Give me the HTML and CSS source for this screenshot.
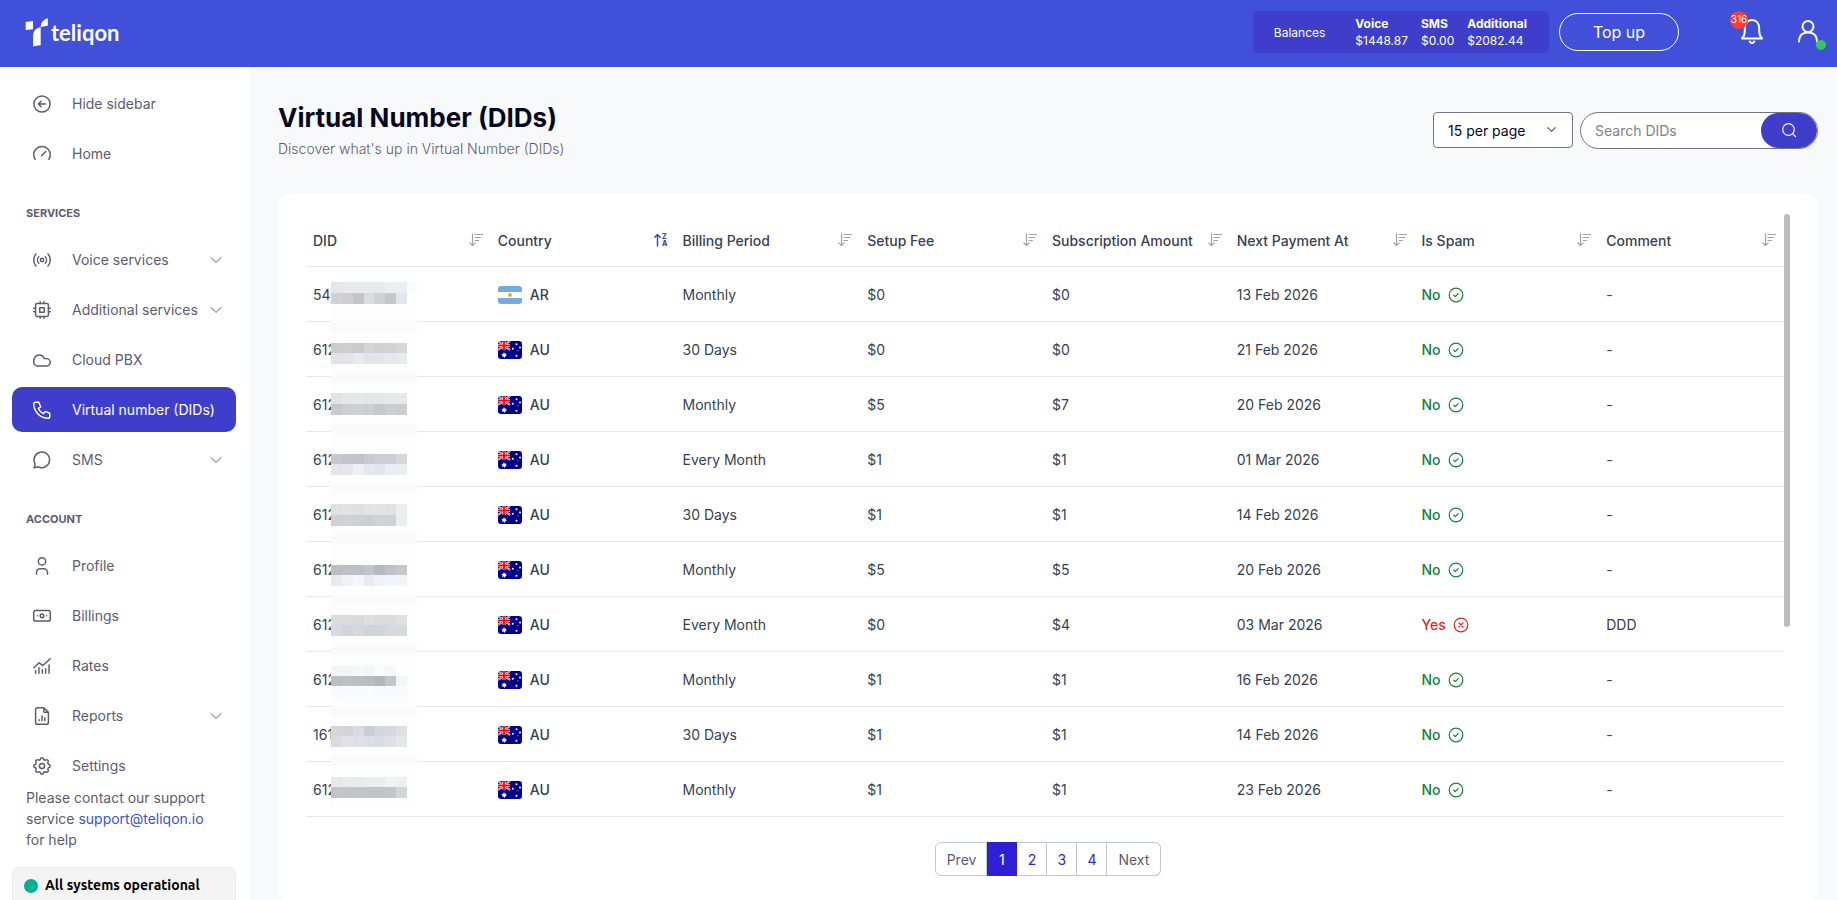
FILE: index.html
```html
<!DOCTYPE html>
<html lang="en">

<head>
  <meta charset="UTF-8" />
  <meta name="viewport" content="width=device-width, initial-scale=1.0" />
  <title>Virtual Number (DIDs)</title>
  <link rel="stylesheet" href="styles.css">
</head>

<body>
  <!-- shared icons -->
  <svg class="sprite" aria-hidden="true">
    <symbol id="chevron" viewBox="0 0 12 12"><path d="M1 3.5l5 5 5-5" /></symbol>
    <symbol id="sort" viewBox="0 0 14 14">
      <path d="M3.5 1v11.5M.8 9.8l2.7 2.7 2.7-2.7M6 1.5h7.5M6 4.5h5.5M6 7.5h3.5" />
    </symbol>
    <symbol id="ok" viewBox="0 0 16 16"><circle cx="8" cy="8" r="6.8" /><path d="M5.8 8.2l1.5 1.4 2.9-2.9" /></symbol>
    <symbol id="bad" viewBox="0 0 16 16"><circle cx="8" cy="8" r="6.8" /><path d="M6 6l4 4M10 6l-4 4" /></symbol>
    <symbol id="flag-AR" viewBox="0 0 24 18">
      <path fill="#fff" d="M0 0h24v18H0z" />
      <path fill="#74acdf" d="M0 0h24v6H0zM0 12h24v6H0z" />
      <circle cx="12" cy="9" r="2" fill="#e9a93a" />
    </symbol>
    <symbol id="flag-AU" viewBox="0 0 24 18">
      <path fill="#00008b" d="M0 0h24v18H0z" />
      <path stroke="#fff" stroke-width="2" stroke-linecap="butt" d="M0 0l12 9M12 0L0 9" />
      <path stroke="#f00" stroke-width=".8" stroke-linecap="butt" d="M0 0l12 9M12 0L0 9" />
      <path stroke="#fff" stroke-width="3" stroke-linecap="butt" d="M6 0v9M0 4.5h12" />
      <path stroke="#f00" stroke-width="1.8" stroke-linecap="butt" d="M6 0v9M0 4.5h12" />
      <g fill="#fff">
        <path d="M6 11.3l.8 1.5 1.7-.3-.7 1.5 1.2 1.1-1.7.2-.5 1.6-1.1-1.3-1.6.5.5-1.6-1.3-1.1 1.7-.4z" />
        <circle cx="18.5" cy="3.3" r="1" />
        <circle cx="14.8" cy="7.7" r="1" />
        <circle cx="22" cy="6.5" r="1" />
        <circle cx="18.5" cy="14.8" r="1" />
        <circle cx="20" cy="9.8" r=".5" />
      </g>
    </symbol>
  </svg>

  <div class="app">
    <header class="topbar">
      <a class="logo" href="#" aria-label="teliqon">
        <svg width="24" height="30" viewBox="0 0 24 30">
          <path d="M.7 4L8 3v8.3L.7 12z" />
          <path d="M22.8.2v7.5l-7 1.3c-.2-4 2.500-7.500 7-8.800z" />
          <path d="M8 28.600V18c0-5 3-8 7.700-9v18z" />
        </svg>
        <span>teliqon</span>
      </a>
      <div class="balances">
        <span class="balances-title">Balances</span>
        <dl>
          <div><dt>Voice</dt><dd>$1448.87</dd></div>
          <div><dt>SMS</dt><dd>$0.00</dd></div>
          <div><dt>Additional</dt><dd>$2082.44</dd></div>
        </dl>
      </div>
      <button class="topup" type="button">Top up</button>
      <button class="bell" type="button" aria-label="Notifications">
        <svg width="24" height="28" viewBox="0 0 24 28">
          <path d="M2 20.5c2-2 2.800-4 2.800-7.500V11C4.800 5.500 7.500 2 12 2s7.200 3.500 7.200 9v2c0 3.500.8 5.500 2.800 7.500z" />
          <path d="M9.800 23.500c1 2 3.400 2 4.400 0" />
        </svg>
        <span class="badge">316</span>
      </button>
      <button class="user" type="button" aria-label="Account">
        <svg width="22" height="26" viewBox="0 0 22 26">
          <circle cx="11" cy="7.5" r="5.5" />
          <path d="M2 22.5c0-6 3.500-9 9-9s9 3 9 9" />
        </svg>
        <span class="status-dot"></span>
      </button>
    </header>

    <aside class="sidebar">
      <nav>
        <a href="#">
          <svg class="icon" viewBox="0 0 24 24"><circle cx="12" cy="12" r="8.8" /><path d="M16 12H8M11 9l-3 3 3 3" /></svg>
          <span>Hide sidebar</span>
        </a>
        <a href="#">
          <svg class="icon" viewBox="0 0 24 24"><path d="M4.5 17.8a9 9 0 1 1 15 0M11.500 13.800l4.500-4.500" /></svg>
          <span>Home</span>
        </a>
        <h2>SERVICES</h2>
        <a href="#">
          <svg class="icon" viewBox="0 0 24 24"><circle cx="12" cy="12" r="1.8" /><path d="M8.5 15.500a5 5 0 0 1 0-7M15.500 8.500a5 5 0 0 1 0 7M5.500 18.500a9.500 9.500 0 0 1 0-13M18.500 5.500a9.500 9.500 0 0 1 0 13" /></svg>
          <span>Voice services</span>
          <svg class="chevron"><use href="#chevron" /></svg>
        </a>
        <a href="#">
          <svg class="icon" viewBox="0 0 24 24"><rect x="5" y="5" width="14" height="14" rx="1.5" /><rect x="9.5" y="9.5" width="5" height="5" /><path d="M3 10h2M3 14h2M10 3v2M14 3v2M21 10h-2M21 14h-2M14 21v-2M10 21v-2" /></svg>
          <span>Additional services</span>
          <svg class="chevron"><use href="#chevron" /></svg>
        </a>
        <a href="#">
          <svg class="icon" viewBox="0 0 24 24"><path d="M7 18.500a4.200 4.200 0 0 1-4-4.300C3 10 4.500 6.500 9 6.500c3 0 4.700 1.800 5.300 4h2.700c2.200 0 4 1.800 4 4s-1.800 4-4 4z" /></svg>
          <span>Cloud PBX</span>
        </a>
        <a class="active" href="#">
          <svg class="icon" viewBox="0 0 24 24"><path d="M5 3.500h3.500l2 5L8 10.300a11 11 0 0 0 5.700 5.700l1.800-2.500 5 2V19a2 2 0 0 1-2 2A16 16 0 0 1 3 5.500a2 2 0 0 1 2-2" /></svg>
          <span>Virtual number (DIDs)</span>
        </a>
        <a href="#">
          <svg class="icon" viewBox="0 0 24 24"><path d="M3.500 20.500l1.100-4.100a8.500 8.500 0 1 1 3.300 3z" /></svg>
          <span>SMS</span>
          <svg class="chevron"><use href="#chevron" /></svg>
        </a>
        <h2>ACCOUNT</h2>
        <a href="#">
          <svg class="icon" viewBox="0 0 24 24"><circle cx="12" cy="7" r="4" /><path d="M6 21v-2a4 4 0 0 1 4-4h4a4 4 0 0 1 4 4v2" /></svg>
          <span>Profile</span>
        </a>
        <a href="#">
          <svg class="icon" viewBox="0 0 24 24"><rect x="3" y="6" width="18" height="11.5" rx="2" /><circle cx="12" cy="11.8" r="2" /><path d="M7 11.800h.01M17 11.800h.01" /></svg>
          <span>Billings</span>
        </a>
        <a href="#">
          <svg class="icon" viewBox="0 0 24 24"><path d="M3 14l6-5.500 4 3L21 4M5 20v-3M8.700 20v-6M12.400 20v-4M16 20v-5M19.700 20v-9" /></svg>
          <span>Rates</span>
        </a>
        <a href="#">
          <svg class="icon" viewBox="0 0 24 24"><path d="M14 3v4a1 1 0 0 0 1 1h4M17 21H7a2 2 0 0 1-2-2V5a2 2 0 0 1 2-2h7l5 5v11a2 2 0 0 1-2 2zM9 17v-1M12 17v-5M15 17v-3" /></svg>
          <span>Reports</span>
          <svg class="chevron"><use href="#chevron" /></svg>
        </a>
        <a href="#">
          <svg class="icon" viewBox="0 0 24 24"><path d="M10.325 4.317c.426-1.756 2.924-1.756 3.350 0a1.724 1.724 0 0 0 2.573 1.066c1.543-.94 3.310.826 2.370 2.370a1.724 1.724 0 0 0 1.065 2.572c1.756.426 1.756 2.924 0 3.350a1.724 1.724 0 0 0-1.066 2.573c.94 1.543-.826 3.310-2.370 2.370a1.724 1.724 0 0 0-2.572 1.065c-.426 1.756-2.924 1.756-3.350 0a1.724 1.724 0 0 0-2.573-1.066c-1.543.94-3.310-.826-2.370-2.370a1.724 1.724 0 0 0-1.065-2.572c-1.756-.426-1.756-2.924 0-3.350a1.724 1.724 0 0 0 1.066-2.573c-.94-1.543.826-3.310 2.370-2.370 1 .608 2.296.07 2.572-1.065z" /><circle cx="12" cy="12" r="2.8" /></svg>
          <span>Settings</span>
        </a>
      </nav>
      <p class="support">Please contact our support service <a href="mailto:support@teliqon.io">support@teliqon.io</a> for help</p>
      <a class="system" href="#"><i></i>All systems operational</a>
    </aside>

    <main>
      <div class="page-head">
        <div>
          <h1>Virtual Number (DIDs)</h1>
          <p>Discover what's up in Virtual Number (DIDs)</p>
        </div>
        <form class="filters">
          <div class="select">
            <select aria-label="Rows per page">
              <option>15 per page</option>
              <option>30 per page</option>
              <option>50 per page</option>
            </select>
            <svg><use href="#chevron" /></svg>
          </div>
          <div class="search">
            <input type="text" placeholder="Search DIDs" aria-label="Search DIDs">
            <button type="button" aria-label="Search">
              <svg width="16" height="16" viewBox="0 0 16 16"><circle cx="7.5" cy="7.5" r="5.8" /><path d="M11.8 11.800l2.700 2.700" /></svg>
            </button>
          </div>
        </form>
      </div>

      <section class="card">
        <div class="table-wrap">
          <div class="table-box">
            <table>
              <thead><tr></tr></thead>
              <tbody></tbody>
            </table>
            <svg class="mosaic" width="86" height="525" aria-hidden="true"></svg>
          </div>
          <div class="scrollbar"><div class="thumb"></div></div>
        </div>
        <div class="pagination">
          <button type="button">Prev</button>
          <button type="button" class="page active">1</button>
          <button type="button" class="page">2</button>
          <button type="button" class="page">3</button>
          <button type="button" class="page">4</button>
          <button type="button">Next</button>
        </div>
      </section>
    </main>
  </div>

  <script>
    const columns = ['DID', 'Country', 'Billing Period', 'Setup Fee', 'Subscription Amount', 'Next Payment At', 'Is Spam', 'Comment']
    // did, country, period, setup, subscription, next payment, spam, comment
    const rows = [
      ['541', 'AR', 'Monthly', '$0', '$0', '13 Feb 2026', false, '-'],
      ['6125', 'AU', '30 Days', '$0', '$0', '21 Feb 2026', false, '-'],
      ['6125', 'AU', 'Monthly', '$5', '$7', '20 Feb 2026', false, '-'],
      ['6125', 'AU', 'Every Month', '$1', '$1', '01 Mar 2026', false, '-'],
      ['6125', 'AU', '30 Days', '$1', '$1', '14 Feb 2026', false, '-'],
      ['6125', 'AU', 'Monthly', '$5', '$5', '20 Feb 2026', false, '-'],
      ['6125', 'AU', 'Every Month', '$0', '$4', '03 Mar 2026', true, 'DDD'],
      ['6125', 'AU', 'Monthly', '$1', '$1', '16 Feb 2026', false, '-'],
      ['1613', 'AU', '30 Days', '$1', '$1', '14 Feb 2026', false, '-'],
      ['6125', 'AU', 'Monthly', '$1', '$1', '23 Feb 2026', false, '-']
    ]

    const sortIcon = '<svg class="sort"><use href="#sort" /></svg>'
    const sortedIcon = `<svg class="sort sorted" viewBox="0 0 14 14"><path d="M3.5 13V1.500M.8 4.200l2.700-2.700 2.700 2.700" />
      <text x="8" y="6">Z</text><text x="8" y="13">A</text></svg>`

    document.querySelector('thead tr').innerHTML = columns.map(name => `
      <th scope="col"><div>${name}${name === 'Country' ? sortedIcon : sortIcon}</div></th>`).join('')

    document.querySelector('tbody').innerHTML = rows.map(([did, country, period, setup, fee, next, spam, comment]) => `
      <tr>
        <td>${did}</td>
        <td><div class="country"><svg><use href="#flag-${country}" /></svg>${country}</div></td>
        <td>${period}</td>
        <td>${setup}</td>
        <td>${fee}</td>
        <td>${next}</td>
        <td><div class="spam ${spam ? 'yes' : ''}">${spam ? 'Yes' : 'No'}<svg><use href="#${spam ? 'bad' : 'ok'}" /></svg></div></td>
        <td>${comment}</td>
      </tr>`).join('')

    // hides the numbers: y of each strip and the grey of its cells
    const strips = [
      [0, 'e5 e8 e8 e8 e8 ed ec f9'], [11, 'd0 ce c3 db d0 c6 e4'],
      [61, 'cb cd c9 d4 d0 d2 d6'], [71, 'e2 e2 e9 e3 e3 e6 e9'],
      [111, 'e2 e6 e6 e4 e6 e7 e8'], [122, 'c8 cd cf cd c6 cd cb'],
      [172, 'c8 c4 c1 c8 cd cd d6'], [182, 'e4 e6 ef e6 e4 ec ec'],
      [222, 'df e1 de e2 e3 e1 ec'], [233, 'd0 d2 cf cd d1 d0 ec'],
      [283, 'bc bf bf c4 b8 c0 c7'], [293, 'e9 f2 f6 ea f2 f3 f3'],
      [333, 'db db d8 df da db df'], [343, 'd8 d3 d7 d2 d2 d7 d8'],
      [384, 'f3 f3 f7 f4 fa f6'], [394, 'bd bf bd bb b5 c4 f4'], [404, 'f8 f9 f9 fa f9 f9 f9'],
      [444, 'd5 d3 db cc d6 d8 df'], [454, 'da e1 df dd db df e6'],
      [495, 'e7 e9 ea ec ec f1 ee'], [505, 'c3 c2 c4 c2 c2 c4 d4']
    ]
    const edges = [0, 11, 22, 33, 43, 54, 65, 76, 86]
    const bands = [40, 91, 142, 202, 252, 313, 363, 424, 474]
    let cells = '<path fill="#fdfdfd" d="M0 0h86v525H0z" opacity=".95" />'
    bands.forEach(y => {
      cells += `<rect y="${y}" width="86" height="10" fill="#fafafa" />`
    })
    strips.forEach(([y, greys]) => {
      greys.split(' ').forEach((g, i) => {
        const v = parseInt(g, 16)
        cells += `<rect x="${edges[i]}" y="${y}" width="${edges[i + 1] - edges[i]}" height="11" fill="rgb(${v}, ${v + 1}, ${v + 4})" />`
      })
    })
    document.querySelector('.mosaic').innerHTML = cells
  </script>
</body>

</html>
```

FILE: styles.css
```css
* {
  margin: 0;
  padding: 0;
  box-sizing: border-box;
}

body {
  font: 14px/21px Inter, "Liberation Sans", sans-serif;
  color: #374151;
  background: #f8f9fb;
}

a {
  text-decoration: none;
  color: inherit;
}

button,
input,
select {
  font: inherit;
  border: 0;
  background: none;
}

svg {
  flex-shrink: 0;
  fill: none;
  stroke-linecap: round;
  stroke-linejoin: round;
}

.sprite {
  position: absolute;
  width: 0;
  height: 0;
}

.app {
  display: grid;
  grid-template-columns: 250px 1fr;
  grid-template-rows: 67px minmax(0, 1fr);
  height: 100vh;
  overflow: hidden;
}

/* top bar */
.topbar {
  grid-column: 1 / 3;
  display: flex;
  align-items: center;
  padding: 0 18px 3px 25px;
  background: #4150d8;
  color: #fff;
}

.topbar button {
  color: #fff;
}

.logo {
  display: flex;
  align-items: center;
  gap: 2px;
  margin-right: auto;
  padding-top: 2px;
  font: 700 22px/30px Lato, sans-serif;
}

.logo svg {
  fill: #fff;
}

.balances {
  display: flex;
  align-items: center;
  gap: 30px;
  height: 42px;
  padding: 0 22px 0 21px;
  border-radius: 6px;
  background: #3e3ecb;
  font-size: 12px;
  line-height: 17px;
}

.balances dl {
  display: flex;
  gap: 13px;
}

.balances dt {
  font-weight: 700;
}

.topup {
  width: 120px;
  height: 38px;
  margin: 0 61px 0 10px;
  border: 1px solid #fff;
  border-radius: 19px;
  font-size: 16px;
}

.bell,
.user {
  position: relative;
  display: flex;
}

.topbar button svg {
  stroke: #fff;
  stroke-width: 2;
}

.user {
  margin-left: 33px;
}

.badge {
  position: absolute;
  top: -7px;
  left: -10px;
  width: 18px;
  height: 18px;
  border-radius: 50%;
  background: #ff3b30;
  font-size: 10px;
  line-height: 17px;
}

.status-dot {
  position: absolute;
  right: -7px;
  bottom: -5px;
  width: 10px;
  height: 10px;
  border-radius: 50%;
  background: #34c759;
}

/* sidebar */
.sidebar {
  display: flex;
  flex-direction: column;
  min-height: 0;
  padding: 14px 14px 0 12px;
  background: #fff;
  color: #5c5c70;
}

nav {
  display: flex;
  flex: 1;
  flex-direction: column;
  gap: 5px;
  min-height: 0;
  overflow: hidden;
}

nav a {
  display: flex;
  flex-shrink: 0;
  align-items: center;
  gap: 19px;
  height: 45px;
  padding: 0 14px 0 19px;
  border-radius: 10px;
}

nav a.active {
  background: #3e3ecb;
  color: #fff;
}

nav h2 {
  padding: 24px 14px 11px;
  font-size: 11px;
  font-weight: 700;
  line-height: 16px;
}

nav span {
  flex: 1;
  white-space: nowrap;
}

.icon {
  width: 22px;
  height: 22px;
  stroke: currentColor;
  stroke-width: 1.6;
}

.chevron {
  width: 12px;
  height: 12px;
  margin-left: -19px;
  stroke: currentColor;
}

.support {
  padding: 0 14px;
}

.support a {
  color: #4150d8;
}

.system {
  display: flex;
  align-items: center;
  gap: 7px;
  height: 33px;
  margin-top: 17px;
  padding: 3px 0 0 11px;
  border: 1px solid #ececec;
  border-bottom: 0;
  border-radius: 7px 7px 0 0;
  background: #f4f4f4;
  color: #000;
  font-family: Ubuntu, "Noto Sans", sans-serif;
  font-weight: 600;
}

.system i {
  width: 14px;
  height: 14px;
  border-radius: 50%;
  background: #00b193;
}

/* content */
main {
  padding: 34px 19px 0 28px;
}

.page-head {
  display: flex;
  align-items: center;
  justify-content: space-between;
  margin-bottom: 34px;
}

h1 {
  margin-bottom: 3px;
  font-size: 26px;
  font-weight: 700;
  line-height: 34px;
  color: #06061e;
}

.page-head p {
  font-weight: 300;
  color: #5c5c70;
}

.filters {
  display: flex;
  align-items: center;
  gap: 7px;
}

.select {
  position: relative;
}

.select select {
  width: 140px;
  height: 36px;
  padding: 0 14px;
  border: 1px solid #737385;
  border-radius: 4px;
  background: #fff;
  color: #06061e;
  appearance: none;
}

.select svg {
  position: absolute;
  top: 13px;
  right: 17px;
  width: 9px;
  height: 9px;
  stroke: #5c5c70;
  stroke-width: 1.6;
}

.search {
  display: flex;
  width: 238px;
  height: 37px;
  border: 1px solid #737385;
  border-radius: 19px;
  background: #fff;
  overflow: hidden;
}

.search input {
  flex: 1;
  min-width: 0;
  padding-left: 14px;
  outline: none;
}

.search input::placeholder {
  color: #82828f;
}

.search button {
  display: flex;
  align-items: center;
  justify-content: center;
  width: 56px;
  border-radius: 18px;
  background: #3e3ecb;
}

.search svg {
  stroke: #fff;
  stroke-width: 1.2;
}

.card {
  padding: 21px 28px 28px;
  border-radius: 14px;
  background: #fff;
}

.table-wrap {
  display: flex;
}

.table-box {
  position: relative;
  flex: 1;
}

table {
  width: 100%;
  table-layout: fixed;
  border-collapse: separate;
  border-spacing: 0;
  text-align: left;
}

th {
  height: 53px;
  padding: 0 8px 0 7px;
  border-bottom: 1px solid #e5e7eb;
  font-weight: 500;
  white-space: nowrap;
}

th div {
  display: flex;
  align-items: center;
  justify-content: space-between;
}

td {
  height: 55px;
  padding: 1px 7px 0;
  border-bottom: 1px solid #e5e7eb;
}

.sort {
  width: 14px;
  height: 14px;
  stroke: #9ca3af;
  stroke-width: 1.2;
}

.sorted {
  stroke: #3e3ecb;
  stroke-width: 1.4;
}

.sorted text {
  font-size: 7px;
  font-weight: 800;
  fill: #3e3ecb;
  stroke: none;
}

.country,
.spam {
  display: flex;
  align-items: center;
  gap: 8px;
  font-weight: 500;
}

.country svg {
  width: 24px;
  height: 18px;
  border-radius: 3px;
}

.spam {
  gap: 7px;
  color: #15803d;
}

.spam.yes {
  color: #dc2626;
}

.spam svg {
  width: 16px;
  height: 16px;
  stroke: currentColor;
  stroke-width: 1.2;
}

/* lies over the DID column */
.mosaic {
  position: absolute;
  top: 68px;
  left: 25px;
}

.scrollbar {
  width: 6px;
}

.thumb {
  height: 413px;
  border-radius: 3px;
  background: #bcbcbc;
}

.pagination {
  display: flex;
  justify-content: center;
  margin-top: 25px;
}

.pagination button {
  height: 34px;
  padding: 0 11px;
  border: 1px solid #c1c5cf;
  border-left-width: 0;
  color: #5c5c70;
}

.pagination button:first-child {
  padding: 0 10px 0 11px;
  border-left-width: 1px;
  border-radius: 6px 0 0 6px;
}

.pagination button:last-child {
  border-radius: 0 6px 6px 0;
}

.pagination .page {
  width: 30px;
  padding: 0;
  color: #2f1fd7;
}

.pagination .page.active {
  border-color: #2f1fd7;
  background: #2f1fd7;
  color: #fff;
}
```
